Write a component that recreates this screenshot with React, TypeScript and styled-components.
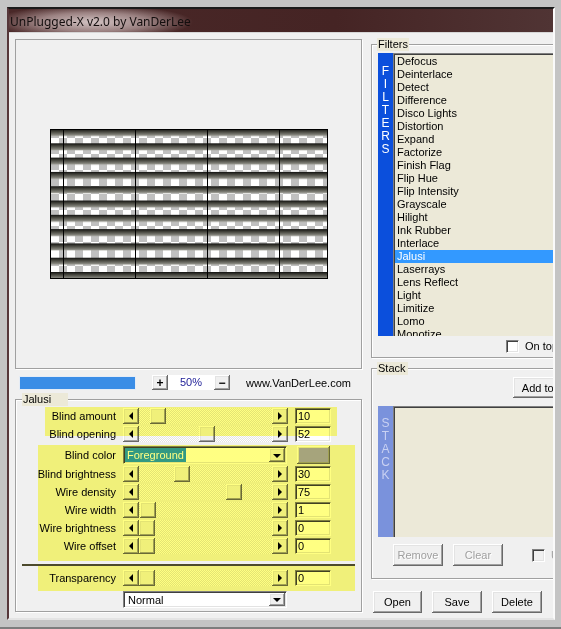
import styled, { createGlobalStyle, css } from "styled-components";

const GlobalStyle = createGlobalStyle`
  html, body { margin: 0; padding: 0; background: #c4c4c4; }
  body {
    font-family: "Liberation Sans", Arial, sans-serif;
    font-size: 11px;
    color: #000;
  }
`;

const raised = css`
  background: #f0f0f0;
  box-shadow: inset -1px -1px 0 #696969, inset 1px 1px 0 #ffffff,
    inset -2px -2px 0 #a0a0a0, inset 2px 2px 0 #e3e3e3;
`;

const sunken = css`
  border-style: solid;
  border-width: 1px;
  border-color: #808080 #ffffff #ffffff #808080;
  box-shadow: inset 1px 1px 0 #404040, inset -1px -1px 0 #e3e3e3;
`;

const filters = [
  "Defocus",
  "Deinterlace",
  "Detect",
  "Difference",
  "Disco Lights",
  "Distortion",
  "Expand",
  "Factorize",
  "Finish Flag",
  "Flip Hue",
  "Flip Intensity",
  "Grayscale",
  "Hilight",
  "Ink Rubber",
  "Interlace",
  "Jalusi",
  "Laserrays",
  "Lens Reflect",
  "Light",
  "Limitize",
  "Lomo",
  "Monotize",
];

const blindRows = [
  { label: "Blind amount", value: 10 },
  { label: "Blind opening", value: 52 },
];

const wireRows = [
  { label: "Blind brightness", value: 30 },
  { label: "Wire density", value: 75 },
  { label: "Wire width", value: 1 },
  { label: "Wire brightness", value: 0 },
  { label: "Wire offset", value: 0 },
];

const thumbPos = (v: number) => Math.floor((v / 100) * 117);

const BlindsPreview = () => (
  <svg width="278" height="150" viewBox="0 0 278 150">
    <defs>
      <pattern id="chk" width="16" height="16" patternUnits="userSpaceOnUse" x="1" y="1">
        <rect width="16" height="16" fill="#fff" />
        <rect width="8" height="8" fill="#c0c0c0" />
        <rect x="8" y="8" width="8" height="8" fill="#c0c0c0" />
      </pattern>
      <linearGradient id="slat" x1="0" y1="0" x2="0" y2="1">
        <stop offset="0" stopColor="#121210" />
        <stop offset="0.4" stopColor="#484840" />
        <stop offset="0.8" stopColor="#7e7e76" />
        <stop offset="1" stopColor="#a2a29a" />
      </linearGradient>
      <pattern id="blinds" width="278" height="14.3" patternUnits="userSpaceOnUse">
        <rect width="278" height="7" fill="url(#slat)" />
      </pattern>
    </defs>
    <rect width="278" height="150" fill="url(#chk)" />
    <rect width="278" height="150" fill="url(#blinds)" />
    {[13.5, 85.5, 157.5, 229.5].map((x) => (
      <line key={x} x1={x} y1="0" x2={x} y2="150" stroke="#000" strokeWidth="1" />
    ))}
    <rect x="0.5" y="0.5" width="277" height="149" fill="none" stroke="#000" />
  </svg>
);

const Arrow = ({ dir }: { dir: "left" | "right" | "down" }) => (
  <Tri $dir={dir} />
);

const Slider = ({ value }: { value: number }) => (
  <SliderBar>
    <ArrowButton>
      <Arrow dir="left" />
    </ArrowButton>
    <Track>
      <Thumb $pos={thumbPos(value)} />
    </Track>
    <ArrowButton>
      <Arrow dir="right" />
    </ArrowButton>
  </SliderBar>
);

const SliderRow = ({
  label,
  value,
  labelW,
}: {
  label: string;
  value: number;
  labelW: number;
}) => (
  <Row $labelW={labelW}>
    <Label>{label}</Label>
    <Slider value={value} />
    <ValueBox>{value}</ValueBox>
  </Row>
);

const App = () => {
  return (
    <>
      <GlobalStyle />
      <Screen>
        <Window>
          <TitleBar>
            <span>UnPlugged-X v2.0 by VanDerLee</span>
          </TitleBar>
          <Client>
            <LeftColumn>
              <Preview>
                <BlindsPreview />
              </Preview>
              <ZoomRow>
                <Progress />
                <SmallButton>+</SmallButton>
                <Percent>50%</Percent>
                <SmallButton>−</SmallButton>
                <Site>www.VanDerLee.com</Site>
              </ZoomRow>
              <Group>
                <Legend $ml={6} $pr={17}>
                  Jalusi
                </Legend>
                <JalusiBody>
                  <Marker $left={29} $width={292} $cover={29}>
                    {blindRows.map((r) => (
                      <SliderRow key={r.label} labelW={71} {...r} />
                    ))}
                  </Marker>
                  <Marker $left={22} $width={317} $mt={2} $pb={6}>
                    <ColorRow>
                      <Label>Blind color</Label>
                      <Select>
                        <SelectText>
                          <Picked>Foreground</Picked>
                        </SelectText>
                        <DropButton>
                          <Arrow dir="down" />
                        </DropButton>
                      </Select>
                      <Swatch />
                    </ColorRow>
                    {wireRows.map((r) => (
                      <SliderRow key={r.label} labelW={78} {...r} />
                    ))}
                  </Marker>
                  <Separator />
                  <Marker $left={22} $width={317} $pt={3} $pb={4}>
                    <SliderRow label="Transparency" value={0} labelW={78} />
                  </Marker>
                  <BlendRow>
                    <Select $h={17}>
                      <SelectText>
                        <Plain>Normal</Plain>
                      </SelectText>
                      <DropButton>
                        <Arrow dir="down" />
                      </DropButton>
                    </Select>
                  </BlendRow>
                </JalusiBody>
              </Group>
            </LeftColumn>

            <RightColumn>
              <Group>
                <Legend $ml={5} $pr={1}>
                  Filters
                </Legend>
                <PanelBody $pt={2} $pb={3}>
                  <ListFrame $h={283}>
                    <SideBar $bg="#0b4fdc" $fg="#ffffff" $pt={12}>
                      {"FILTERS".split("").map((c, i) => (
                        <span key={i}>{c}</span>
                      ))}
                    </SideBar>
                    <ListBox>
                      {filters.map((f) => (
                        <ListItem key={f} $active={f === "Jalusi"}>
                          {f}
                        </ListItem>
                      ))}
                    </ListBox>
                  </ListFrame>
                  <CheckRow $ml={128} $mt={2}>
                    <CheckBox />
                    <span>On top</span>
                  </CheckRow>
                </PanelBody>
              </Group>

              <Group $mt={4}>
                <Legend $ml={5} $pr={2}>
                  Stack
                </Legend>
                <PanelBody $pt={2} $pb={12}>
                  <Button $w={80} $h={21} $ml={135}>
                    Add to Stack
                  </Button>
                  <ListFrame $h={131} $mt={8}>
                    <SideBar $bg="#7a92dc" $fg="#c9d1f2" $pt={11}>
                      {"STACK".split("").map((c, i) => (
                        <span key={i}>{c}</span>
                      ))}
                    </SideBar>
                    <ListBox />
                  </ListFrame>
                  <ButtonRow $mt={7} $ml={15}>
                    <Button $w={50} disabled>
                      Remove
                    </Button>
                    <Button $w={50} disabled>
                      Clear
                    </Button>
                    <CheckRow $ml={19}>
                      <CheckBox $disabled />
                      <Muted>Use stack</Muted>
                    </CheckRow>
                  </ButtonRow>
                </PanelBody>
              </Group>

              <ButtonRow $mt={12} $ml={2}>
                <Button $w={49}>Open</Button>
                <Button $w={50}>Save</Button>
                <Button $w={50}>Delete</Button>
              </ButtonRow>
            </RightColumn>
          </Client>
        </Window>
      </Screen>
    </>
  );
};

export default App;

const Screen = styled.div`
  width: 561px;
  height: 629px;
  box-sizing: border-box;
  padding: 7px 6px 7px 7px;
  background: #c4c4c4;
  border-bottom: 2px solid #7d7d7d;
  overflow: hidden;
`;

const Window = styled.div`
  height: 100%;
  box-sizing: border-box;
  display: flex;
  flex-direction: column;
  border-top: 2px solid #1b1b1b;
  border-left: 2px solid #56373a;
  border-right: 2px solid #fafafa;
  border-bottom: 2px solid #e4e4e4;
`;

const TitleBar = styled.div`
  flex: none;
  height: 24px;
  display: flex;
  align-items: center;
  padding: 2px 0 0 1px;
  box-sizing: border-box;
  border-bottom: 1px solid #d6d6d6;
  background: radial-gradient(
      ellipse 100px 17px at 84px 13px,
      rgba(222, 208, 208, 0.92) 0%,
      rgba(190, 168, 168, 0.7) 55%,
      rgba(120, 90, 90, 0) 100%
    ),
    linear-gradient(90deg, #4a2828, #452424 60%, #503434);
  font-family: "Noto Sans", "Open Sans", sans-serif;
  font-size: 12px;
  color: #140e0e;
`;

const Client = styled.div`
  flex: 1;
  display: flex;
  gap: 9px;
  padding-left: 6px;
  background: #f0f0f0;
  overflow: hidden;
`;

const LeftColumn = styled.div`
  flex: none;
  width: 347px;
  display: flex;
  flex-direction: column;
`;

const RightColumn = styled.div`
  flex: none;
  width: 230px;
  display: flex;
  flex-direction: column;
  padding-top: 2px;
`;

const Preview = styled.div`
  margin-top: 6px;
  height: 330px;
  box-sizing: border-box;
  border: 1px solid #a0a0a0;
  box-shadow: 1px 1px 0 #ffffff;
  display: flex;
  align-items: center;
  justify-content: center;

  svg {
    display: block;
  }
`;

const ZoomRow = styled.div`
  margin-top: 6px;
  height: 15px;
  display: flex;
  align-items: center;
`;

const Progress = styled.div`
  margin: 0 16px 0 4px;
  width: 117px;
  height: 14px;
  box-sizing: border-box;
  background: #3a8de6;
  border: 1px solid #e4ecf6;
`;

const SmallButton = styled.div`
  ${raised};
  width: 16px;
  height: 15px;
  display: flex;
  align-items: center;
  justify-content: center;
  font-size: 12px;
  font-weight: bold;
  line-height: 1;
`;

const Percent = styled.div`
  width: 46px;
  height: 15px;
  background: #ffffff;
  color: #1d1d97;
  text-align: center;
  line-height: 15px;
`;

const Site = styled.div`
  margin-left: 16px;
  white-space: nowrap;
`;

const Group = styled.fieldset<{ $mt?: number }>`
  margin: ${(p) => p.$mt ?? 3}px 0 0;
  padding: 0;
  min-width: 0;
  border: 1px solid #a0a0a0;
  box-shadow: inset 1px 1px 0 #ffffff, 1px 1px 0 #ffffff;
`;

const Legend = styled.legend<{ $ml: number; $pr: number }>`
  margin-left: ${(p) => p.$ml}px;
  padding: 0 ${(p) => p.$pr}px 0 1px;
  height: 13px;
  line-height: 13px;
  background: #ece9d8;
  font-size: 11px;
`;

const JalusiBody = styled.div`
  padding: 1px 0 3px;
`;

const PanelBody = styled.div<{ $pt: number; $pb: number }>`
  padding: ${(p) => p.$pt}px 0 ${(p) => p.$pb}px 6px;
  display: flex;
  flex-direction: column;
  align-items: flex-start;
`;

const Marker = styled.div<{
  $left: number;
  $width: number;
  $cover?: number;
  $mt?: number;
  $pt?: number;
  $pb?: number;
}>`
  position: relative;
  margin: ${(p) => p.$mt ?? 0}px 0 0 ${(p) => p.$left}px;
  padding: ${(p) => p.$pt ?? 0}px 0 ${(p) => p.$pb ?? 0}px;
  width: ${(p) => p.$width}px;

  &::after {
    content: "";
    position: absolute;
    left: 0;
    right: 0;
    top: 0;
    ${(p) => (p.$cover ? `height: ${p.$cover}px;` : "bottom: 0;")}
    background: #ffff82;
    mix-blend-mode: multiply;
    pointer-events: none;
  }
`;

const Row = styled.div<{ $labelW: number }>`
  display: grid;
  grid-template-columns: ${(p) => p.$labelW}px 165px 36px;
  column-gap: 7px;
  align-items: center;
  height: 18px;
`;

const ColorRow = styled.div`
  display: grid;
  grid-template-columns: 78px 164px 33px;
  column-gap: 7px;
  align-items: center;
  height: 20px;
`;

const Label = styled.div`
  display: flex;
  justify-content: flex-end;
  white-space: nowrap;
`;

const SliderBar = styled.div`
  display: flex;
  height: 16px;
`;

const ArrowButton = styled.div`
  ${raised};
  flex: none;
  width: 16px;
  height: 16px;
  display: flex;
  align-items: center;
  justify-content: center;
`;

const Tri = styled.span<{ $dir: "left" | "right" | "down" }>`
  width: 0;
  height: 0;
  border-style: solid;
  ${(p) =>
    p.$dir === "left"
      ? "border-width: 4px 4px 4px 0; border-color: transparent #000 transparent transparent;"
      : p.$dir === "right"
      ? "border-width: 4px 0 4px 4px; border-color: transparent transparent transparent #000;"
      : "border-width: 4px 4px 0 4px; border-color: #000 transparent transparent transparent; margin-top: 1px;"}
`;

const Track = styled.div`
  flex: 1;
  display: flex;
  background: repeating-conic-gradient(#ffffff 0 25%, #e4e4e4 0 50%) 0 0 / 2px
    2px;
`;

const Thumb = styled.div<{ $pos: number }>`
  ${raised};
  flex: none;
  width: 16px;
  height: 16px;
  margin-left: ${(p) => p.$pos}px;
`;

const ValueBox = styled.div`
  ${sunken};
  height: 16px;
  box-sizing: border-box;
  background: #ffffff;
  padding: 0 0 0 2px;
  line-height: 14px;
`;

const Select = styled.div<{ $h?: number }>`
  ${sunken};
  width: 164px;
  height: ${(p) => p.$h ?? 18}px;
  box-sizing: border-box;
  background: #ffffff;
  display: flex;
  align-items: stretch;
  padding: 1px;
`;

const SelectText = styled.div`
  flex: 1;
  display: flex;
  align-items: center;
`;

const Picked = styled.span`
  background: #3399ff;
  color: #ffffff;
  padding: 0 2px;
  line-height: 14px;
`;

const Plain = styled.span`
  padding-left: 3px;
`;

const DropButton = styled.div`
  ${raised};
  flex: none;
  width: 16px;
  display: flex;
  align-items: center;
  justify-content: center;
`;

const Swatch = styled.div`
  ${raised};
  margin-left: 3px;
  width: 33px;
  height: 18px;
  background: #a6a4f4;
`;

const Separator = styled.div`
  margin: 3px 0 0 6px;
  width: 333px;
  height: 2px;
  background: #4c4a2c;
`;

const BlendRow = styled.div`
  margin-left: 107px;
`;

const ListFrame = styled.div<{ $h: number; $mt?: number }>`
  display: flex;
  width: 100%;
  height: ${(p) => p.$h}px;
  margin-top: ${(p) => p.$mt ?? 0}px;
`;

const SideBar = styled.div<{ $bg: string; $fg: string; $pt: number }>`
  flex: none;
  width: 15px;
  box-sizing: border-box;
  padding-top: ${(p) => p.$pt}px;
  background: ${(p) => p.$bg};
  color: ${(p) => p.$fg};
  display: flex;
  flex-direction: column;
  align-items: center;
  font-size: 12px;
  line-height: 13px;
`;

const ListBox = styled.div`
  flex: 1;
  background: #ece9d8;
  border-top: 1px solid #808080;
  border-left: 1px solid #808080;
  box-shadow: inset 1px 1px 0 #404040;
  padding: 1px 0 0 1px;
  overflow: hidden;
`;

const ListItem = styled.div<{ $active?: boolean }>`
  height: 13px;
  line-height: 13px;
  padding-left: 2px;
  white-space: nowrap;
  background: ${(p) => (p.$active ? "#3399ff" : "transparent")};
  color: ${(p) => (p.$active ? "#ffffff" : "#000000")};
`;

const CheckRow = styled.div<{ $ml?: number; $mt?: number }>`
  display: flex;
  align-items: center;
  gap: 6px;
  height: 16px;
  margin: ${(p) => p.$mt ?? 0}px 0 0 ${(p) => p.$ml ?? 0}px;
  white-space: nowrap;
`;

const CheckBox = styled.span<{ $disabled?: boolean }>`
  ${sunken};
  flex: none;
  width: 13px;
  height: 13px;
  box-sizing: border-box;
  background: ${(p) => (p.$disabled ? "#f0f0f0" : "#ffffff")};
`;

const Muted = styled.span`
  color: #a0a0a0;
`;

const ButtonRow = styled.div<{ $mt: number; $ml: number }>`
  display: flex;
  align-items: center;
  gap: 10px;
  margin: ${(p) => p.$mt}px 0 0 ${(p) => p.$ml}px;
`;

const Button = styled.button<{ $w: number; $h?: number; $ml?: number }>`
  ${raised};
  flex: none;
  width: ${(p) => p.$w}px;
  height: ${(p) => p.$h ?? 22}px;
  margin-left: ${(p) => p.$ml ?? 0}px;
  border: none;
  padding: 0;
  font-family: "Liberation Sans", Arial, sans-serif;
  font-size: 11px;
  color: #000;
  white-space: nowrap;

  &:disabled {
    color: #a0a0a0;
    text-shadow: 1px 1px 0 #ffffff;
  }
`;
